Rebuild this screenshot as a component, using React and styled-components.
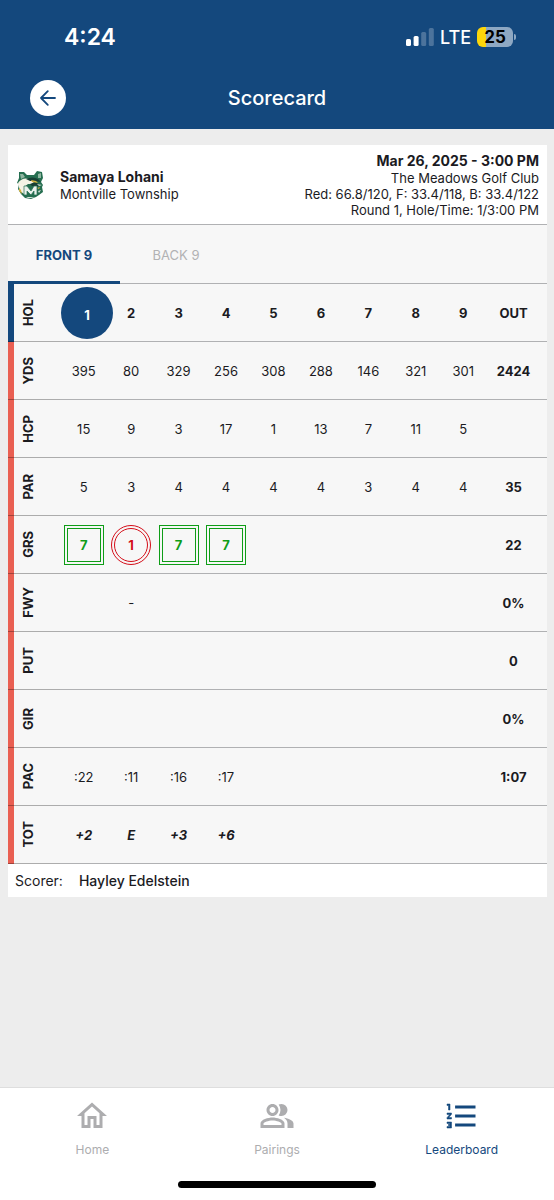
import React from 'react';
import styled, { createGlobalStyle } from 'styled-components';
import { MdOutlineHome } from 'react-icons/md';

const NAVY = '#14487d';
const CORAL = '#e95f52';
const LINE = '#b0b1b3';

const GlobalStyle = createGlobalStyle`
  * { box-sizing: border-box; }
  body {
    margin: 0;
    background: #ededed;
    color: #1b1b1f;
    font-family: Inter, "Liberation Sans", sans-serif;
  }
  button { font: inherit; border: 0; padding: 0; cursor: pointer; }
  a { text-decoration: none; }
`;

const Page = styled.div`
  min-height: 100vh;
  display: flex;
  flex-direction: column;
`;

const Header = styled.header`
  background: ${NAVY};
  color: #fff;
  padding-bottom: 13px;
`;

const StatusBar = styled.div`
  display: flex;
  justify-content: space-between;
  align-items: center;
  height: 74px;
  padding: 0 38px 0 64px;
`;

const Clock = styled.time`
  font-size: 23px;
  font-weight: 600;
`;

const StatusRight = styled.div`
  display: flex;
  align-items: center;
  gap: 6px;
  font-size: 18px;
  font-weight: 500;
`;

const BatteryGroup = styled.div`
  display: flex;
  align-items: center;
  gap: 1px;
`;

const Battery = styled.div`
  width: 36px;
  height: 20px;
  border-radius: 6px;
  background: linear-gradient(to right, #fdd60a 25%, #8ea8c3 25%);
  color: #000;
  font-size: 17px;
  font-weight: 700;
  line-height: 20px;
  text-align: center;
`;

const BatteryTip = styled.span`
  width: 2px;
  height: 6px;
  border-radius: 0 2px 2px 0;
  background: #8ea8c3;
`;

const TitleBar = styled.div`
  display: grid;
  grid-template-columns: 36px 1fr 36px;
  align-items: start;
  height: 42px;
  padding: 6px 30px 0;
`;

const BackButton = styled.button`
  display: flex;
  align-items: center;
  justify-content: center;
  width: 36px;
  height: 36px;
  border-radius: 50%;
  background: #fff;
  color: ${NAVY};
`;

const Title = styled.h1`
  margin: 0;
  font-size: 20px;
  font-weight: 500;
  line-height: 36px;
  text-align: center;
`;

const Main = styled.main`
  flex: 1;
  padding: 16px 7px 16px 8px;
`;

const Card = styled.article`
  background: #fff;
`;

const PlayerHeader = styled.section`
  display: flex;
  align-items: center;
  justify-content: space-between;
  height: 80px;
  padding: 0 8px;
  border-bottom: 1px solid ${LINE};
  font-size: 13px;
  line-height: 16px;
`;

const Player = styled.div`
  display: flex;
  align-items: center;
  gap: 16px;
`;

const Strong = styled.strong`
  display: block;
  font-size: 14px;
  font-weight: 700;
  line-height: 18px;
`;

const RoundInfo = styled.div`
  text-align: right;
`;

const Tabs = styled.div`
  display: flex;
  height: 59px;
  background: #f7f7f7;
  border-bottom: 1px solid ${LINE};
`;

const Tab = styled.button`
  width: 112px;
  height: 59px;
  padding-top: 4px;
  background: none;
  font-size: 13px;
  font-weight: ${(p) => (p.$active ? 700 : 400)};
  color: ${(p) => (p.$active ? NAVY : '#b2b2b4')};
  border-bottom: 3px solid ${(p) => (p.$active ? NAVY : 'transparent')};
`;

const ScoreTable = styled.table`
  width: 100%;
  table-layout: fixed;
  border-collapse: separate;
  border-spacing: 0;
  background: #f7f7f7;
  font-size: 13px;
  line-height: 16px;
  text-align: center;
`;

const LabelCol = styled.col` width: 52px; `;
const OutCol = styled.col` width: 60px; `;

const Row = styled.tr`
  height: 58px;
  font-weight: ${(p) => (p.$bold ? 700 : 400)};
  font-style: ${(p) => (p.$italic ? 'italic' : 'normal')};
`;

const RowLabel = styled.th`
  padding: 0 0 0 12px;
  background: linear-gradient(${(p) => (p.$current ? `${NAVY}, ${NAVY}` : `${CORAL}, ${CORAL}`)})
    left top / 6px 100% no-repeat border-box;
  border-bottom: 1px solid rgba(0, 0, 0, 0.3);
  font-style: normal;
`;

const VerticalText = styled.span`
  display: block;
  width: 16px;
  writing-mode: vertical-rl;
  transform: rotate(180deg);
  text-align: center;
  font-weight: 700;
`;

const Cell = styled.td`
  padding: 0;
  border-bottom: 1px solid ${LINE};
`;

const OutCell = styled(Cell)`
  padding-right: 7px;
  font-weight: 700;
`;

const HoleButton = styled.button`
  display: block;
  width: 52px;
  height: 52px;
  margin-left: 1px;
  padding-top: 4px;
  border-radius: 50%;
  background: ${NAVY};
  color: #fff;
  font-weight: 700;
`;

const Score = styled.span`
  display: block;
  width: 40px;
  height: 40px;
  margin: 0 auto;
  border: 4px double ${(p) => (p.$under ? '#d40d18' : '#0f9d17')};
  border-radius: ${(p) => (p.$under ? '50%' : '0')};
  color: ${(p) => (p.$under ? '#d40d18' : '#0f9d17')};
  font-weight: 700;
  line-height: 32px;
`;

const Scorer = styled.footer`
  display: flex;
  gap: 16px;
  padding: 9px 7px 8px;
  font-size: 14px;
  line-height: 16px;
`;

const ScorerName = styled.span` font-weight: 500; `;

const BottomBar = styled.nav`
  height: 113px;
  background: #fff;
  border-top: 1px solid #dedede;
`;

const NavItems = styled.div`
  display: grid;
  grid-template-columns: repeat(3, 1fr);
  height: 93px;
  padding-top: 10px;
`;

const NavItem = styled.a`
  display: flex;
  flex-direction: column;
  align-items: center;
  gap: 8px;
  color: ${(p) => (p.$active ? NAVY : '#adadaf')};
  font-size: 12px;
  line-height: 16px;
`;

const HomeIndicator = styled.div`
  width: 198px;
  height: 7px;
  margin: 0 auto;
  border-radius: 4px;
  background: #000;
`;

function Signal() {
  return (
    <svg width="28" height="18" viewBox="0 0 28 18" fill="#fff" aria-label="Signal strength">
      <rect x="0" y="11" width="5" height="7" rx="1.5" />
      <rect x="7.6" y="8" width="5" height="10" rx="1.5" />
      <rect x="15.2" y="4" width="5" height="14" rx="1.5" opacity=".24" />
      <rect x="22.8" y="0" width="5" height="18" rx="1.5" opacity=".24" />
    </svg>
  );
}

function BackArrow() {
  return (
    <svg width="24" height="24" viewBox="0 0 24 24" fill="none" stroke="currentColor" strokeWidth="1.8" strokeLinecap="round" strokeLinejoin="round" aria-hidden="true">
      <path d="M19 12H5M11.8 5.2L5 12l6.8 6.8" />
    </svg>
  );
}

function PeopleIcon() {
  return (
    <svg width="36" height="36" viewBox="0 0 24 24" fill="currentColor" aria-hidden="true">
      <path d="M16.67 13.13C18.04 14.06 19 15.32 19 17v3h4v-3c0-2.18-3.57-3.47-6.33-3.87z" />
      <path d="M15 12a4 4 0 0 0 0-8c-.6 0-1.3.12-1.9.35a6.5 6.5 0 0 1 0 7.3c.6.23 1.3.35 1.9.35z" />
      <path d="M9 12c2.21 0 4-1.79 4-4s-1.79-4-4-4-4 1.79-4 4 1.79 4 4 4zm0-6c1.1 0 2 .9 2 2s-.9 2-2 2-2-.9-2-2 .9-2 2-2zM9 13c-2.67 0-8 1.34-8 4v3h16v-3c0-2.66-5.33-4-8-4zm6 5H3v-.99C3.2 16.29 6.3 15 9 15s5.8 1.29 6 2v1z" />
    </svg>
  );
}

function RankingIcon() {
  return (
    <svg width="36" height="36" viewBox="0 0 24 24" fill="currentColor" aria-hidden="true">
      <path d="M7.4 5v2H21V5H7.4zm0 14H21v-2H7.4v2zm0-6H21v-2H7.4v2z" />
      <path stroke="currentColor" strokeWidth=".35" d="M2 17h2v.5H3v1h1v.5H2v1h3v-4H2v1zm1-9h1V4H2v1h1v3zm-1 3h1.8L2 13.1v.9h3v-1H3.2L5 10.9V10H2v1z" />
    </svg>
  );
}

function TeamLogo() {
  return (
    <svg width="28" height="28" viewBox="0 0 28 28" aria-label="Montville Township team logo">
      <path fill="#256e50" d="M3 1l5 0 3 3h7l3-4 5 1 1 6-2 4 2 3-1 2 1 5-4 3-3 2-5 2-6-1-4-4-3-5 1-5-2-1 2-5z" />
      <path fill="#8fb5a0" d="M4 3l3 0 2 3-4 2zM22 3l3-1 0 5-3 0z" />
      <path fill="#f4f3e6" d="M2 12q4-6 11-4l6 2-3 3h-4l-4 3v7l-4-3z" />
      <path fill="#173f34" d="M10 8q7-3 12 0l3 3-6-1-5 0zM14 13l5-2 5 3-3 2-5-1z" />
      <path fill="#d3b13e" d="M15 9l5 1 2 2-6-1zM3 17l2 2 1 4-3-3zM21 17l3-1-1 2z" />
      <path fill="#e9f1ec" stroke="#256e50" strokeWidth=".7" d="M8 15h3l4 5 3-5h3v9h-3v-4l-3 4-4-4v4H8z" />
      <path fill="#d5e1d9" d="M21 13l5 1-3 1zM22 20l3-1-2 3zM10 26h9l-4 1h-3z" />
    </svg>
  );
}

const rows = [
  { label: 'HOL', cells: ['1', '2', '3', '4', '5', '6', '7', '8', '9'], out: 'OUT', bold: true },
  { label: 'YDS', cells: ['395', '80', '329', '256', '308', '288', '146', '321', '301'], out: '2424' },
  { label: 'HCP', cells: ['15', '9', '3', '17', '1', '13', '7', '11', '5'], out: '' },
  { label: 'PAR', cells: ['5', '3', '4', '4', '4', '4', '3', '4', '4'], out: '35' },
  { label: 'GRS', cells: ['7', '1', '7', '7'], out: '22' },
  { label: 'FWY', cells: ['', '-'], out: '0%' },
  { label: 'PUT', cells: [], out: '0' },
  { label: 'GIR', cells: [], out: '0%' },
  { label: 'PAC', cells: [':22', ':11', ':16', ':17'], out: '1:07' },
  { label: 'TOT', cells: ['+2', 'E', '+3', '+6'], out: '', bold: true, italic: true },
];

const holes = Array.from({ length: 9 }, (_, i) => i);

function cellContent(row, i) {
  const value = row.cells[i] || '';
  if (row.label === 'HOL' && i === 0) return <HoleButton type="button">{value}</HoleButton>;
  if (row.label === 'GRS' && value) return <Score $under={i === 1}>{value}</Score>;
  return value;
}

export default function App() {
  return (
    <Page>
      <GlobalStyle />
      <Header>
        <StatusBar>
          <Clock>4:24</Clock>
          <StatusRight>
            <Signal />
            <span>LTE</span>
            <BatteryGroup>
              <Battery>25</Battery>
              <BatteryTip />
            </BatteryGroup>
          </StatusRight>
        </StatusBar>
        <TitleBar>
          <BackButton type="button" aria-label="Back"><BackArrow /></BackButton>
          <Title>Scorecard</Title>
        </TitleBar>
      </Header>
      <Main>
        <Card>
          <PlayerHeader>
            <Player>
              <TeamLogo />
              <div>
                <Strong>Samaya Lohani</Strong>
                <span>Montville Township</span>
              </div>
            </Player>
            <RoundInfo>
              <Strong>Mar 26, 2025 - 3:00 PM</Strong>
              <div>The Meadows Golf Club</div>
              <div>Red: 66.8/120, F: 33.4/118, B: 33.4/122</div>
              <div>Round 1, Hole/Time: 1/3:00 PM</div>
            </RoundInfo>
          </PlayerHeader>
          <Tabs role="tablist">
            <Tab type="button" role="tab" aria-selected="true" $active>FRONT 9</Tab>
            <Tab type="button" role="tab" aria-selected="false">BACK 9</Tab>
          </Tabs>
          <ScoreTable>
            <colgroup>
              <LabelCol />
              {holes.map((i) => <col key={i} />)}
              <OutCol />
            </colgroup>
            <tbody>
              {rows.map((row) => (
                <Row key={row.label} $bold={row.bold} $italic={row.italic}>
                  <RowLabel scope="row" $current={row.label === 'HOL'}>
                    <VerticalText>{row.label}</VerticalText>
                  </RowLabel>
                  {holes.map((i) => <Cell key={i}>{cellContent(row, i)}</Cell>)}
                  <OutCell>{row.out}</OutCell>
                </Row>
              ))}
            </tbody>
          </ScoreTable>
          <Scorer>
            <span>Scorer:</span>
            <ScorerName>Hayley Edelstein</ScorerName>
          </Scorer>
        </Card>
      </Main>
      <BottomBar>
        <NavItems>
          <NavItem href="#home"><MdOutlineHome size={36} />Home</NavItem>
          <NavItem href="#pairings"><PeopleIcon />Pairings</NavItem>
          <NavItem href="#leaderboard" $active><RankingIcon />Leaderboard</NavItem>
        </NavItems>
        <HomeIndicator />
      </BottomBar>
    </Page>
  );
}
